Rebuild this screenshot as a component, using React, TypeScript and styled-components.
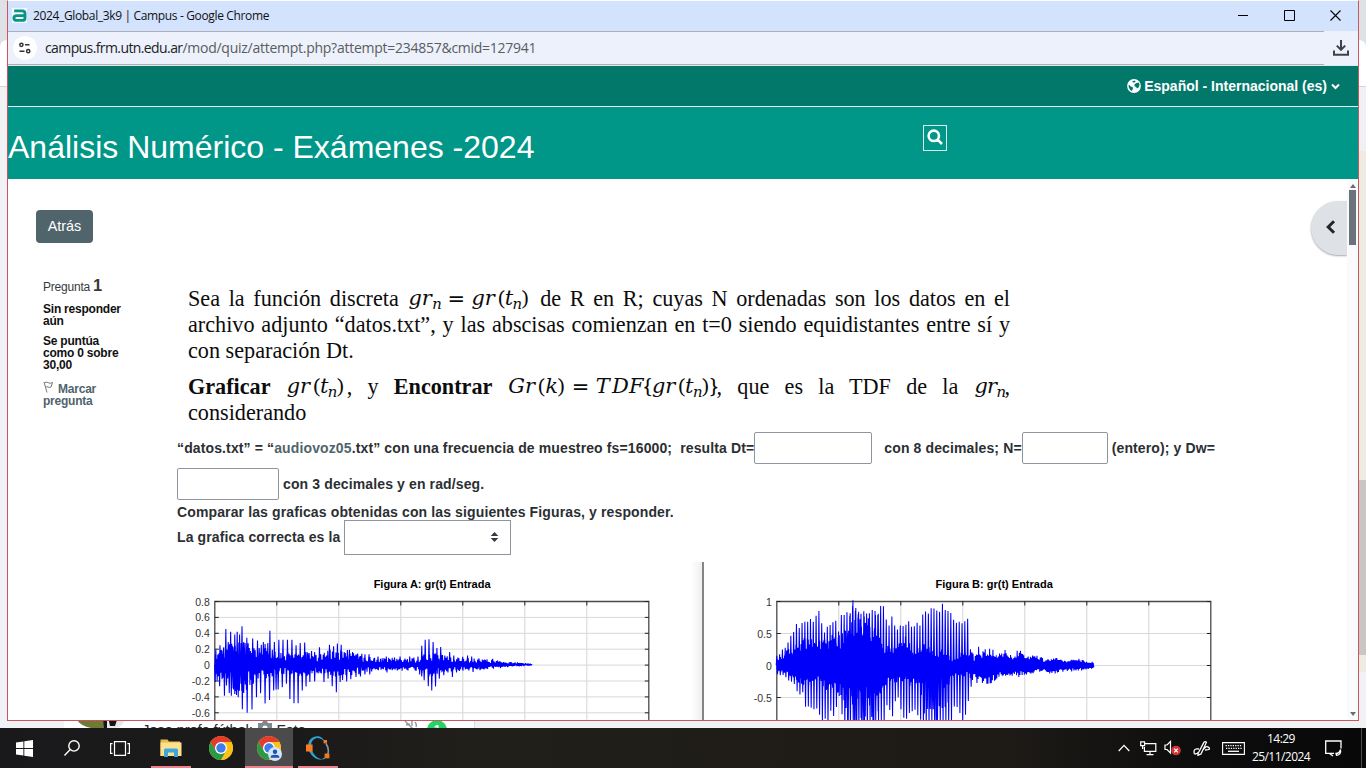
import React from 'react';
import styled, { createGlobalStyle, css } from 'styled-components';

const GlobalStyle = createGlobalStyle`
  * { box-sizing: border-box; }
  html, body { margin: 0; padding: 0; }
  body { width: 1366px; height: 768px; overflow: hidden; font-family: "Liberation Sans", Arial, sans-serif; }
  svg { display: block; flex: none; }
`;

const SANS_UI = '"Open Sans", "Noto Sans", sans-serif';

const Screen = styled.div`
  display: flex;
  flex-direction: column;
  width: 1366px;
  height: 768px;
  overflow: hidden;
`;

/* ---------- desktop behind the exam window ---------- */

const Desktop = styled.div`
  position: relative;
  display: flex;
  justify-content: space-between;
  height: 728px;
  background: #f0f2f5;
`;

const BackEdge = styled.div<{ $w: number }>`
  display: flex;
  flex-direction: column;
  width: ${(p) => p.$w}px;
`;

const EdgeBlock = styled.div<{ $h: number; $bg: string; $round?: string; $line?: boolean }>`
  height: ${(p) => p.$h}px;
  background: ${(p) => p.$bg};
  border-radius: ${(p) => p.$round ?? '0'};
  ${(p) => p.$line && css`border-bottom: 1px solid #d4d6da;`}
`;

const EdgeTabs = styled.div`
  background: #dee1e6;
`;

const ChatStrip = styled.div`
  display: flex;
  align-items: flex-start;
  align-self: flex-end;
  width: 411px;
  height: 8px;
  margin-right: auto;
  margin-left: 57px;
  padding-left: 13px;
  overflow: hidden;
  background: #fff;
  border-right: 1px solid #d9dbde;
`;

const ChatName = styled.div`
  display: flex;
  gap: 5px;
  width: 262px;
  margin: 0 0 0 17px;
  color: #222b31;
  font-size: 15px;
  line-height: 19px;
  letter-spacing: -0.25px;
  white-space: nowrap;
  svg { margin-top: 1px; }
`;

const UnreadBadge = styled.div`
  width: 20px;
  height: 20px;
  margin-left: 8px;
  border-radius: 50%;
  background: #25d366;
  color: #fff;
  font: bold 12px/21px "Liberation Sans", sans-serif;
  text-align: center;
`;

/* ---------- window chrome ---------- */

const Window = styled.div`
  position: absolute;
  left: 7px;
  top: 0;
  display: flex;
  flex-direction: column;
  width: 1352px;
  height: 721px;
  border: 1px solid #c9565c;
  border-top: 1px solid #fdfdfd;
  background: #fff;
  overflow: hidden;
`;

const TitleBar = styled.div`
  display: flex;
  align-items: center;
  height: 30px;
  padding-left: 4px;
  background: #d3e2fd;
`;

const WindowTitle = styled.div`
  flex: 1;
  margin-left: 5px;
  color: #111;
  font: 12px/16px ${SANS_UI};
  letter-spacing: -0.35px;
`;

const WindowButton = styled.div`
  display: flex;
  align-items: center;
  justify-content: center;
  width: 46px;
  height: 30px;
  padding: 0 0 1px 1px;
`;

const AddressRow = styled.div`
  display: flex;
  height: 35px;
  background: #ecf1fb;
  border-bottom: 1px solid #dfe8ee;
`;

const AddressBar = styled.div`
  display: flex;
  align-items: center;
  width: 1316px;
  padding-left: 5px;
  border-top: 1px solid #adadb3;
  border-bottom: 1px solid #b4aeb2;
`;

const SiteInfo = styled.div`
  display: flex;
  align-items: center;
  justify-content: center;
  width: 24px;
  height: 24px;
  border-radius: 50%;
  background: #fff;
`;

const Url = styled.div`
  margin-left: 8px;
  color: #5a5c60;
  font: 14px/20px ${SANS_UI};
  letter-spacing: -0.26px;
`;

const Host = styled.span`
  color: #202124;
  letter-spacing: -0.6px;
`;

const DownloadButton = styled.div`
  display: flex;
  flex: 1;
  align-items: center;
  justify-content: center;
`;

/* ---------- site header ---------- */

const LanguageBar = styled.div`
  display: flex;
  align-items: center;
  justify-content: flex-end;
  height: 41px;
  padding-right: 18px;
  background: #02786a;
  border-bottom: 1px solid #e6f5f2;
  color: #fff;
  font-size: 14px;
  font-weight: bold;
`;

const LanguageLabel = styled.span`
  margin: 0 4px 0 3px;
`;

const CourseBar = styled.header`
  display: flex;
  height: 72px;
  background: #009688;
`;

const CourseTitle = styled.h1`
  width: 915px;
  margin: 0;
  padding-top: 22px;
  color: #fff;
  font-size: 32px;
  font-weight: normal;
  line-height: 36px;
`;

const SearchButton = styled.div`
  display: flex;
  justify-content: center;
  width: 24px;
  height: 26px;
  margin-top: 18px;
  padding-top: 3px;
  border: 1px solid #d9efec;
`;

/* ---------- content ---------- */

const Content = styled.div`
  display: flex;
  height: 541px;
  overflow: hidden;
`;

const Sidebar = styled.aside`
  width: 169px;
  padding: 31px 0 0 28px;
  font-size: 12px;
  line-height: 12px;
`;

const BackButton = styled.button`
  display: block;
  width: 57px;
  height: 33px;
  padding: 0 0 1px;
  border: 0;
  border-radius: 4px;
  background: #50646b;
  color: #fff;
  font: 14.4px/32px "Liberation Sans", sans-serif;
`;

const QuestionInfo = styled.div`
  display: flex;
  flex-direction: column;
  width: 90px;
  margin: 34px 0 0 7px;
  letter-spacing: -0.22px;
`;

const QuestionNumber = styled.div`
  color: #373a3c;
  line-height: 16px;
  b { font-size: 16.5px; }
`;

const InfoText = styled.div<{ $top: number }>`
  margin-top: ${(p) => p.$top}px;
  color: #111;
  font-weight: bold;
`;

const FlagLink = styled.div`
  margin-top: 12px;
  color: #50646b;
  font-weight: bold;
  svg { display: inline-block; margin: -4px 4px 0 0; vertical-align: 0; }
`;

const Question = styled.main`
  width: 1133px;
`;

const Statement = styled.div`
  width: 822px;
  margin: 107px 0 0 11px;
  color: #0c0c0c;
  font-family: "Liberation Serif", "Times New Roman", serif;
  font-size: 22.2px;
`;

const Line = styled.div<{ $last?: boolean; $gap?: number }>`
  height: 26px;
  margin-top: ${(p) => p.$gap ?? 0}px;
  line-height: 26px;
  white-space: nowrap;
  text-align: left;
  text-align-last: ${(p) => (p.$last ? 'left' : 'justify')};
`;

const Formula = styled.span<{ $w: number; $ls?: number }>`
  display: inline-block;
  width: ${(p) => p.$w}px;
  height: 26px;
  font-family: "DejaVu Math TeX Gyre", "Liberation Serif", serif;
  font-size: 21px;
  line-height: 26px;
  letter-spacing: ${(p) => p.$ls ?? -1.1}px;
  word-spacing: 1.6px;
  text-align-last: left;
  vertical-align: top;
  sub { margin-left: -1.5px; font-size: 15px; line-height: 0; vertical-align: -4px; }
`;

const Tight = styled.span`
  letter-spacing: -2.6px;
`;

const AnswerForm = styled.div`
  color: #2b2f33;
  font-size: 14px;
  font-weight: bold;
  letter-spacing: 0.125px;
  white-space: pre;
`;

const AnswerRow = styled.div<{ $h: number; $top: number }>`
  display: flex;
  align-items: center;
  height: ${(p) => p.$h}px;
  margin-top: ${(p) => p.$top}px;
`;

const FileLink = styled.span`
  color: #50646b;
`;

const AnswerBox = styled.span<{ $w: number; $after: number }>`
  width: ${(p) => p.$w}px;
  height: 32px;
  margin-right: ${(p) => p.$after}px;
  border: 1px solid #8f959e;
  border-radius: 2px;
  background: #fff;
`;

const SelectLabel = styled.span`
  width: 163px;
  padding-bottom: 2px;
`;

const AnswerSelect = styled.span`
  display: flex;
  align-items: center;
  justify-content: flex-end;
  width: 167px;
  height: 35px;
  margin-left: 4px;
  padding: 0 11px 1px 0;
  border: 1px solid #8f959e;
  background: #fff;
`;

const Figures = styled.div`
  display: flex;
  margin-top: 7px;
`;

const Figure = styled.div<{ $w: number; $shade?: boolean }>`
  width: ${(p) => p.$w}px;
  height: 158px;
  ${(p) =>
    p.$shade &&
    css`
      border-right: 2px solid #858585;
      background: linear-gradient(to right, rgba(255, 255, 255, 0) 514px, #efefef 525px);
    `}
`;

const PlotSvg = styled.svg`
  font-family: "Liberation Sans", sans-serif;
  .title { font-size: 11px; font-weight: bold; fill: #000; text-anchor: middle; }
  .tick { font-size: 10.5px; fill: #333; text-anchor: end; }
`;

const DrawerColumn = styled.div`
  display: flex;
  flex: 1;
  justify-content: flex-end;
`;

const DrawerToggle = styled.div`
  display: flex;
  align-items: center;
  width: 36px;
  height: 54px;
  margin-top: 22px;
  padding: 0 0 2px 14px;
  border-radius: 28px 0 0 28px;
  background: #dee2e6;
  box-shadow: 0 1px 2px rgba(0, 0, 0, 0.35);
  clip-path: inset(-6px 0 -6px -6px);
`;

const Scrollbar = styled.div`
  display: flex;
  flex-direction: column;
  align-items: center;
  width: 11px;
  padding: 5px 0 4px;
  background: #f9fafc;
`;

const Thumb = styled.div`
  width: 7px;
  height: 55px;
  margin: 2px 0 auto;
  background: #6a737b;
`;

/* ---------- taskbar ---------- */

const Taskbar = styled.div`
  display: flex;
  justify-content: space-between;
  height: 40px;
  background: linear-gradient(to right, #19191b 0, #1b1a1a 300px, #211f1a 480px, #1e1b17 1000px, #0d0d0d 1200px, #080808 1366px);
`;

const TaskGroup = styled.div`
  display: flex;
  color: #fff;
`;

const TaskItem = styled.div<{ $w: number; $active?: boolean; $open?: number }>`
  position: relative;
  display: flex;
  align-items: center;
  justify-content: center;
  width: ${(p) => p.$w}px;
  height: 40px;
  background: ${(p) => (p.$active ? '#4b4b4c' : 'transparent')};
  ${(p) =>
    p.$open &&
    css`
      &::after {
        content: "";
        position: absolute;
        bottom: 0;
        width: ${p.$open}px;
        height: 2px;
        background: #f2808c;
      }
    `}
`;

const Clock = styled.div`
  width: 64px;
  padding-top: 2px;
  color: #fff;
  font: 12px/18px ${SANS_UI};
  letter-spacing: -0.55px;
  text-align: center;
`;

const ShowDesktop = styled.div`
  width: 5px;
  margin-left: 8px;
  border-left: 1px solid #4a4a4a;
`;

/* ---------- plots ---------- */

type Pt = [number, number];

/* Sample coordinates of the traces are three per pixel down and 2.904 per pixel across. */
const SX = 2.904;
const SY = 3;

const lerp = (pts: Pt[], x: number) => {
  for (let i = 1; i < pts.length; i++) {
    if (x <= pts[i][0]) {
      const [x0, y0] = pts[i - 1];
      const [x1, y1] = pts[i];
      return y0 + ((y1 - y0) * (x - x0)) / (x1 - x0);
    }
  }
  return pts[pts.length - 1][1];
};

const noise = (seed: number) => {
  let s = seed;
  return () => {
    s = (s * 16807) % 2147483647;
    return s / 2147483647;
  };
};

const f = (n: number) => n.toFixed(2);

const denseTrace = (up: Pt[], down: Pt[], x0: number, x1: number, seed: number, floor: number, step = 1.7) => {
  const rnd = noise(seed);
  let d = '';
  for (let x = x0, i = 0; x < x1; x += step, i++) {
    const e = i % 2 ? lerp(up, x) : lerp(down, x);
    d += `${d ? 'L' : 'M'}${f(x / SX)} ${f((e * (floor + (1 - floor) * rnd())) / SY)}`;
  }
  return d;
};

const spikes = (pts: Pt[]) => pts.map(([x, y]) => `M${f((x - 1.6) / SX)} 0L${f(x / SX)} ${f((y * 1.02) / SY)}L${f((x + 1.6) / SX)} 0`).join('');

const comb = (env: Pt[], x0: number, x1: number, step: number, seed: number, floor = 0.9) => {
  const rnd = noise(seed);
  const out: Pt[] = [];
  for (let x = x0; x < x1; x += step) out.push([x, lerp(env, x) * (floor + (1.02 - floor) * rnd())]);
  return out;
};

const rel = (cx: number, cy: number, flat: number[]): Pt[] => {
  const out: Pt[] = [];
  for (let i = 0; i < flat.length; i += 2) out.push([flat[i] - cx, flat[i + 1] - cy]);
  return out;
};

const aUp = rel(130, 329, [133,285,145,272,151,287,156,278,162,224,169,262,176,232,182,275,188,240,195,232,202,240,209,216,214,262,218,265,223,250,229,280,240,252,246,290,254,258,259,280,265,270,271,262,276,268,284,265,290,229,297,285,303,262,316,256,328,256,341,256,354,256,366,272,378,265,391,264,398,292,404,295,411,289,420,292,434,278,445,300,463,270,475,275,486,267,497,270,508,300,515,286,521,285,530,292,545,296,557,297,566,298,578,298,592,310,604,305,616,310,628,305,640,315,652,308,668,305,682,312,696,305,708,308,720,305,731,273,741,256,752,254,764,262,775,280,786,277,798,302,812,292,824,302,836,308,850,306,864,302,876,305,897,310,916,315,937,312,948,318]);
const aDown = rel(130, 329, [131,380,144,392,151,372,158,420,164,390,172,412,178,420,183,398,188,415,193,418,198,425,206,385,210,460,214,412,224,470,238,461,242,385,251,425,263,413,276,443,289,433,301,405,308,402,314,402,326,395,338,385,348,430,360,442,372,442,384,405,395,393,406,380,420,378,430,355,447,380,459,370,471,392,483,410,494,380,501,374,513,378,525,372,540,365,553,364,566,358,580,358,605,345,630,352,645,345,660,346,690,344,712,346,725,358,731,364,738,375,750,392,760,405,771,393,782,370,795,360,807,352,820,365,832,352,850,344,868,346,880,350,900,345,920,340]);
const aCoreUp = rel(130, 329, [130,280,160,270,180,250,225,255,240,280,270,275,300,290,350,285,400,290,440,298,470,280,500,282,540,295,600,309,650,308,720,308,740,290,775,290,800,303,860,307,900,311,950,315,1000,321,1052,326]);
const aCoreDown = rel(130, 329, [130,380,160,385,180,410,220,410,240,380,280,370,320,358,390,370,430,355,480,367,520,362,560,356,600,348,720,348,745,368,775,358,820,350,880,346,950,341,1000,336,1052,331]);

const bUp = rel(223, 331, [223,300,231,298,240,283,248,275,256,262,264,235,272,225,281,200,290,219,298,200,306,205,314,198,322,180,331,195,339,168,348,168,356,215,365,230,374,209,382,200,392,180,400,230,406,238,411,173,420,171,428,171,436,180,444,140,452,156,460,176,475,172,490,166,506,165,514,175,522,160,530,147,538,185,545,212,552,200,560,183,570,235,580,205,595,210,603,186,612,212,625,205,640,208,645,172,653,159,662,180,672,162,680,155,695,170,703,148,712,170,725,162,733,187,745,208,756,192,765,205,773,186,781,198,784,285,789,270,797,308,803,288,810,257,817,290,822,284,833,280,850,282,862,297,870,292,890,282,900,295,910,300,920,285,936,286,948,303,963,295,985,302,1000,312,1020,310,1040,308,1060,315,1100,310,1120,318,1145,318]);
const bDown = rel(223, 331, [223,360,240,360,256,375,272,385,288,422,297,405,305,455,322,455,331,470,339,465,348,480,356,500,372,510,382,460,390,485,400,435,406,428,411,475,420,510,460,520,520,505,536,500,540,450,550,458,556,495,565,453,575,430,590,490,605,500,612,460,621,470,635,490,645,510,700,520,730,500,737,465,745,448,754,475,761,500,769,490,778,445,786,400,796,375,805,405,815,390,833,395,850,382,870,370,890,362,920,368,950,360,1000,350,1020,358,1050,352,1100,348,1145,342]);
const bCoreUp = rel(223, 331, [223,312,250,286,270,275,300,250,320,235,350,258,380,238,410,240,430,200,460,180,490,185,510,225,530,260,570,275,600,235,620,285,650,260,680,290,710,280,730,315,775,280,790,310,815,290,850,290,890,296,930,298,1000,312,1145,320]);
const bCoreDown = rel(223, 331, [223,350,250,362,280,380,300,392,340,390,380,415,410,430,440,450,490,445,520,420,550,385,600,392,640,398,680,390,720,405,735,365,770,365,800,355,820,375,850,370,890,360,930,355,1000,346,1145,340]);

const traceA =
  denseTrace(aCoreUp, aCoreDown, 0, 922, 11, 0.3) + spikes(aUp) + spikes(aDown);
const traceB =
  denseTrace(bCoreUp, bCoreDown, 0, 565, 29, 0.55, 1.5) +
  spikes(comb(bUp, 0, 565, 8.15, 5)) + spikes(comb(bDown, 2, 565, 8.15, 7)) +
  spikes(comb(bUp, 205, 300, 8.15, 15, 0.6)) + spikes(comb(bDown, 195, 300, 6.2, 17, 0.6)) +
  spikes(comb(bUp, 424, 500, 8.15, 25, 0.5)) + spikes(comb(bDown, 420, 500, 8.6, 27, 0.5)) +
  spikes([[221, -191]]) +
  denseTrace(bUp, bDown, 562, 922, 3, 0.5, 1.6);

type PlotProps = { width: number; left: number; zero: number; title: string; trace: string; ticks: { label: string; y: number }[] };

const Plot = ({ width, left, zero, title, trace, ticks }: PlotProps) => (
  <PlotSvg width={width} height={158} viewBox={`0 0 ${width} 158`}>
    <text className="title" x={left + 217.3} y={26}>{title}</text>
    {[1, 2, 3, 4, 5, 6].map((k) => (
      <path key={k} d={`M${left + 62 * k} 39V158`} stroke="#d4d4d4" />
    ))}
    {ticks.slice(1).map((t) => (
      <path key={t.label} d={`M${left} ${t.y}H${left + 434}`} stroke="#d8d8d8" />
    ))}
    <path d={`M${left} 158V39.5H${left + 434}V158`} fill="none" stroke="#4a4a4a" strokeWidth="1.3" />
    {[1, 2, 3, 4, 5, 6].map((k) => (
      <path key={k} d={`M${left + 62 * k} 39v4.5`} stroke="#222" />
    ))}
    {ticks.map((t) => (
      <g key={t.label}>
        <path d={`M${left} ${t.y}h4M${left + 434} ${t.y}h-4`} stroke="#222" />
        <text className="tick" x={left - 5} y={t.y + 4}>{t.label}</text>
      </g>
    ))}
    <g transform={`translate(${left} ${zero})`}>
      <path d={trace} fill="none" stroke="#0000fa" strokeWidth="1.05" strokeLinejoin="bevel" />
    </g>
  </PlotSvg>
);

const ticksA = ['0.8', '0.6', '0.4', '0.2', '0', '-0.2', '-0.4', '-0.6'].map((label, i) => ({ label, y: 39.5 + 15.9 * i }));
const ticksB = ['1', '0.5', '0', '-0.5'].map((label, i) => ({ label, y: 39.5 + 32 * i }));

/* ---------- icons ---------- */

const CampusLogo = () => (
  <svg width="16" height="16" viewBox="0 0 16 16">
    <rect x="0" y="0" width="15" height="15" fill="#f1f8fa" />
    <path d="M2.2 2.9H10Q13 2.9 13 5.5V9.9Q13 12.4 10.2 12.4H4.8Q1.9 12.4 1.9 10T4.8 7.6H13" fill="none" stroke="#0b9384" strokeWidth="2.9" />
  </svg>
);

const TuneIcon = () => (
  <svg width="14" height="14" viewBox="0 0 14 14" fill="none" stroke="#333" strokeWidth="1.5">
    <circle cx="3.4" cy="3.8" r="1.6" /><path d="M7 3.8h4.5M1.5 10.2h5" /><circle cx="10.2" cy="10.2" r="1.6" />
  </svg>
);

const DownloadIcon = () => (
  <svg width="18" height="18" viewBox="0 0 18 18" fill="none" stroke="#3f4246" strokeWidth="2">
    <path d="M9 1v9.5M4.8 6.6L9 10.8l4.2-4.2M2 11.5v4.3h14v-4.3" />
  </svg>
);

const GlobeIcon = () => (
  <svg width="14" height="14" viewBox="0 0 14 14">
    <circle cx="7" cy="7" r="6.9" fill="#fff" />
    <path d="M5.2 2.2L7.8 1.6 8.6 2.6 7.4 3.6 6 3.4ZM9.4 4L11.6 3.4 12.6 5.6 11.8 8.2 9.8 9.6 9.2 8 7.4 7.2 7.6 5.2ZM1.8 5.4L3.8 7.4 5.6 8 6 9.8 5 11.4 5.4 12.4 3 10.8 1.6 8Z" fill="#02786a" />
  </svg>
);

type LineIconProps = { d: string; w: number; h: number; sw: number; color: string };

const LineIcon = ({ d, w, h, sw, color }: LineIconProps) => (
  <svg width={w} height={h} viewBox={`0 0 ${w} ${h}`} fill="none" stroke={color} strokeWidth={sw}>
    <path d={d} />
  </svg>
);

const ChromeIcon = ({ profile }: { profile?: boolean }) => (
  <svg width="26" height="26" viewBox="-13 -13 26 26">
    <circle r="12" fill="#fbc116" />
    <path d="M-10.39 -6A12 12 0 0 1 10.39 -6H0L-5.2 3Z" fill="#e33b2e" />
    <path d="M-10.39 -6L-5.2 3 0 6 5.2 3 0 12A12 12 0 0 1 -10.39 -6Z" fill="#2a9a47" />
    <path d="M0 -6H10.39A12 12 0 0 1 0 12L5.2 3Z" fill="#fbc116" />
    <circle r="6" fill="#fff" />
    <circle r="4.7" fill="#3b7ded" />
    {profile && (
      <g transform="translate(6 6)">
        <circle r="7" fill="#d5e4fb" />
        <circle cy="-2.2" r="2.2" fill="#1e53b0" />
        <path d="M-4.3 3.8V2.8Q-4.3 0.8 0 0.8T4.3 2.8V3.8Z" fill="#1e53b0" />
      </g>
    )}
  </svg>
);

const FolderIcon = () => (
  <svg width="22" height="20" viewBox="0 0 22 20">
    <path d="M0.5 1.5H7.5L9 3.5H20V18H0.5Z" fill="#e9b94a" />
    <path d="M0.5 4.5H21.5V18H0.5Z" fill="#fbe08e" />
    <path d="M4 19V12Q4 10.5 5.5 10.5H16.5Q18 10.5 18 12V19H14V14.5H8V19Z" fill="#3ea6d8" />
  </svg>
);

const OctaveIcon = () => (
  <svg width="26" height="26" viewBox="0 0 26 26">
    <path d="M12 1.2C4.5 2 2 8 3.6 14.5C5.5 21 11.5 25.5 17.5 24.6C12.5 23.6 8.3 20 6.8 14.8C5 9 6.8 4.5 11 3.2C14.5 2.2 18.5 4.5 21 8.5C19 3.5 15.5 0.9 12 1.2Z" fill="#2fa3cf" />
    <path d="M21 8.5Q25.2 15 22 21" fill="none" stroke="#7d97a5" strokeWidth="1.6" />
    <path d="M17.5 24.2Q20 23.6 21.5 21.5" fill="none" stroke="#2fa3cf" strokeWidth="1.2" />
    <rect x="1" y="9.5" width="6.6" height="7" fill="#ff7a1e" />
    <rect x="18.6" y="5" width="3.4" height="3.4" fill="#f07a22" />
    <rect x="19.6" y="18.5" width="4.8" height="4.8" fill="#f07a22" />
  </svg>
);

const App = () => (
  <Screen>
    <GlobalStyle />
    <Desktop>
      <BackEdge $w={7}>
        <EdgeTabs>
          <EdgeBlock $h={40} $bg="#dee1e6" />
          <EdgeBlock $h={47} $bg="#fff" $round="8px 0 0 0" $line />
        </EdgeTabs>
      </BackEdge>
      <ChatStrip>
        <svg width="48" height="8" viewBox="0 0 48 8">
          <path d="M0 0H30V8H14Q4 6 0 0Z" fill="#6f7a35" />
          <path d="M26 0H48Q44 8 38 8H28Z" fill="#e8e8ea" />
          <path d="M32 1L40 0 38 6 33 6ZM26 0H30V8H27Z" fill="#15161a" />
        </svg>
        <ChatName>
          <span>Jose profe fútbol:</span>
          <svg width="14" height="14" viewBox="0 0 14 14"><path d="M0 2H4L5 0H9L10 2H14V13H0Z" fill="#7d8a92" /><circle cx="7" cy="7" r="2.6" fill="#fff" /></svg>
          <span>Foto</span>
        </ChatName>
        <svg width="15" height="15" viewBox="0 0 15 15" fill="none" stroke="#8696a0" strokeWidth="1.4"><path d="M1 1L14 14M8 1V6M11 2Q13 4 12 7M2 5L6 4" /></svg>
        <UnreadBadge>1</UnreadBadge>
      </ChatStrip>
      <BackEdge $w={7}>
        <EdgeTabs>
          <EdgeBlock $h={40} $bg="#dee1e6" />
          <EdgeBlock $h={47} $bg="#fff" $round="0 8px 0 0" $line />
        </EdgeTabs>
        <EdgeBlock $h={64} $bg="#eff1f5" />
        <EdgeBlock $h={329} $bg="#efeae3" />
        <EdgeBlock $h={175} $bg="#c9c6c4" />
        <EdgeBlock $h={17} $bg="#efeae3" />
      </BackEdge>

      <Window>
        <TitleBar>
          <CampusLogo />
          <WindowTitle>2024_Global_3k9 | Campus - Google Chrome</WindowTitle>
          <WindowButton><LineIcon w={11} h={11} d="M0 5.5H10" sw={1} color="#000" /></WindowButton>
          <WindowButton><LineIcon w={11} h={11} d="M.5 .5H10.5V10.5H.5Z" sw={1} color="#000" /></WindowButton>
          <WindowButton><LineIcon w={11} h={11} d="M.5 .5L10.5 10.5M10.5 .5L.5 10.5" sw={1.1} color="#000" /></WindowButton>
        </TitleBar>
        <AddressRow>
          <AddressBar>
            <SiteInfo><TuneIcon /></SiteInfo>
            <Url><Host>campus.frm.utn.edu.ar</Host>/mod/quiz/attempt.php?attempt=234857&amp;cmid=127941</Url>
          </AddressBar>
          <DownloadButton><DownloadIcon /></DownloadButton>
        </AddressRow>
        <LanguageBar>
          <GlobeIcon />
          <LanguageLabel>Español - Internacional (es)</LanguageLabel>
          <LineIcon w={9} h={7} d="M1 1.5L4.5 5L8 1.5" sw={2} color="#fff" />
        </LanguageBar>
        <CourseBar>
          <CourseTitle>Análisis Numérico - Exámenes -2024</CourseTitle>
          <SearchButton>
            <LineIcon w={16} h={16} d="M6.8 1.6A5.2 5.2 0 1 1 6.8 12A5.2 5.2 0 1 1 6.8 1.6M10.6 10.6L15 15" sw={2.6} color="#fff" />
          </SearchButton>
        </CourseBar>

        <Content>
          <Sidebar>
            <BackButton>Atrás</BackButton>
            <QuestionInfo>
              <QuestionNumber>Pregunta <b>1</b></QuestionNumber>
              <InfoText $top={8}>Sin responder<br />aún</InfoText>
              <InfoText $top={8}>Se puntúa<br />como 0 sobre<br />30,00</InfoText>
              <FlagLink>
                <svg width="11" height="12" viewBox="0 0 11 12" fill="none" stroke="#777" strokeWidth="1"><path d="M1 1L4 11.5M1.4 1.6Q3.5 .6 5.5 1.8T9.5 1.4L8 6Q6.5 7 5 6T2.6 6.4" /></svg>
                Marcar<br />pregunta
              </FlagLink>
            </QuestionInfo>
          </Sidebar>

          <Question>
            <Statement>
              <Line>
                Sea la función discreta{' '}
                <Formula $w={124}>𝑔𝑟<sub>𝑛</sub> = 𝑔𝑟(𝑡<sub>𝑛</sub>)</Formula>{' '}
                de R en R; cuyas N ordenadas son los datos en el
              </Line>
              <Line>archivo adjunto “datos.txt”, y las abscisas comienzan en t=0 siendo equidistantes entre sí y</Line>
              <Line $last>con separación Dt.</Line>
              <Line $gap={10}>
                <b>Graficar</b> <Formula $w={61}>𝑔𝑟(𝑡<sub>𝑛</sub>)</Formula>, y <b>Encontrar</b>{' '}
                <Formula $w={209}>𝐺𝑟(𝑘) = <Tight>𝑇𝐷𝐹</Tight>{'{'}𝑔𝑟(𝑡<sub>𝑛</sub>){'}'}</Formula>, que es la TDF de la{' '}
                <Formula $w={31} $ls={-2}>𝑔𝑟<sub>𝑛</sub></Formula>,
              </Line>
              <Line $last>considerando</Line>
            </Statement>

            <AnswerForm>
              <AnswerRow $h={32} $top={6}>
                “datos.txt” = “<FileLink>audiovoz05</FileLink>.txt” con una frecuencia de muestreo fs=16000;{'\u00a0 '}resulta Dt=
                <AnswerBox $w={118} $after={12} />con 8 decimales; N=
                <AnswerBox $w={86} $after={4} />(entero); y Dw=
              </AnswerRow>
              <AnswerRow $h={32} $top={4}>
                <AnswerBox $w={102} $after={4} />con 3 decimales y en rad/seg.
              </AnswerRow>
              <AnswerRow $h={20} $top={2}>Comparar las graficas obtenidas con las siguientes Figuras, y responder.</AnswerRow>
              <AnswerRow $h={35} $top={-2}>
                <SelectLabel>La grafica correcta es la</SelectLabel>
                <AnswerSelect>
                  <svg width="9" height="10" viewBox="0 0 9 10" fill="#343a40"><path d="M4.5 0L8.3 4H.7ZM4.5 10L.7 6H8.3Z" /></svg>
                </AnswerSelect>
              </AnswerRow>
            </AnswerForm>

            <Figures>
              <Figure $w={527} $shade>
                <Plot width={525} left={37.8} zero={102.7} title="Figura A: gr(t) Entrada" trace={traceA} ticks={ticksA} />
              </Figure>
              <Figure $w={560}>
                <Plot width={560} left={72.8} zero={103.3} title="Figura B: gr(t) Entrada" trace={traceB} ticks={ticksB} />
              </Figure>
            </Figures>
          </Question>

          <DrawerColumn>
            <DrawerToggle>
              <LineIcon w={11} h={14} d="M9 1.2L3.2 7L9 12.8" sw={3} color="#212529" />
            </DrawerToggle>
          </DrawerColumn>
          <Scrollbar>
            <svg width="6" height="4" viewBox="0 0 6 4" fill="#6b6b6b"><path d="M3 0L6 4H0Z" /></svg>
            <Thumb />
            <svg width="6" height="4" viewBox="0 0 6 4" fill="#6b6b6b"><path d="M3 4L0 0H6Z" /></svg>
          </Scrollbar>
        </Content>
      </Window>
    </Desktop>

    <Taskbar>
      <TaskGroup>
        <TaskItem $w={48}>
          <svg width="17" height="17" viewBox="0 0 17 17" fill="#fff"><path d="M0 2.4L7.4 1.4V8H0ZM8.3 1.2L17 0V8H8.3ZM0 9H7.4V15.6L0 14.6ZM8.3 9H17V17L8.3 15.8Z" /></svg>
        </TaskItem>
        <TaskItem $w={48}>
          <LineIcon w={16} h={16} d="M10 .7A5.2 5.2 0 1 1 10 11.1A5.2 5.2 0 1 1 10 .7M6.2 9.6L.5 15.5" sw={1.4} color="#fff" />
        </TaskItem>
        <TaskItem $w={48}>
          <LineIcon w={20} h={15} d="M4.5 .7H15.5V14.3H4.5ZM2.6 2.6H.6V12.4H2.6M17.4 2.6H19.4V12.4H17.4" sw={1.2} color="#fff" />
        </TaskItem>
        <TaskItem $w={53} $open={40}><FolderIcon /></TaskItem>
        <TaskItem $w={48}><ChromeIcon /></TaskItem>
        <TaskItem $w={48} $active $open={48}><ChromeIcon profile /></TaskItem>
        <TaskItem $w={50} $open={40}><OctaveIcon /></TaskItem>
      </TaskGroup>
      <TaskGroup>
        <TaskItem $w={24}><LineIcon w={12} h={8} d="M.7 7L6 1.4L11.3 7" sw={1.3} color="#fff" /></TaskItem>
        <TaskItem $w={24}>
          <LineIcon w={17} h={15} d="M5 2.6H15.8V10.4H4.4V6M10 10.4V13.6M6.5 13.7H13.5M.7 .8H4.6V4.6H.7ZM2.6 4.6V8" sw={1.2} color="#fff" />
        </TaskItem>
        <TaskItem $w={25}>
          <svg width="18" height="16" viewBox="0 0 18 16" fill="none" stroke="#fff" strokeWidth="1.2">
            <path d="M1 5H3L6.5 1.5V13L3 9.5H1Z" />
            <circle cx="12" cy="10.5" r="4.8" fill="#d13438" stroke="none" />
            <path d="M10.2 8.7L13.8 12.3M13.8 8.7L10.2 12.3" />
          </svg>
        </TaskItem>
        <TaskItem $w={32}>
          <LineIcon w={17} h={17} d="M5 13.5L11 2.2Q12.4 .8 13.4 2.4L8 14L5 15.2ZM6 9Q1 8 1 12T6 12M10 10Q13 5 15.8 7.4T12 10" sw={1.3} color="#fff" />
        </TaskItem>
        <TaskItem $w={32}>
          <svg width="23" height="13" viewBox="0 0 23 13" fill="none" stroke="#fff">
            <path d="M.6 .6H22.4V12.4H.6Z" strokeWidth="1.1" />
            <path d="M3.5 3.7H20M4 6.4H20" strokeWidth="1.3" strokeDasharray="1.3 1.1" />
            <path d="M6 9.3H17" strokeWidth="1.3" />
          </svg>
        </TaskItem>
        <Clock>14:29<br />25/11/2024</Clock>
        <TaskItem $w={40}>
          <LineIcon w={17} h={17} d="M9 13.4H.7V1H16V8.4M4.5 13.4L8 16M11 13.5Q14.5 13.5 15.5 9.5Q16.4 15 11.5 15.4Z" sw={1.3} color="#fff" />
        </TaskItem>
        <ShowDesktop />
      </TaskGroup>
    </Taskbar>
  </Screen>
);

export default App;
